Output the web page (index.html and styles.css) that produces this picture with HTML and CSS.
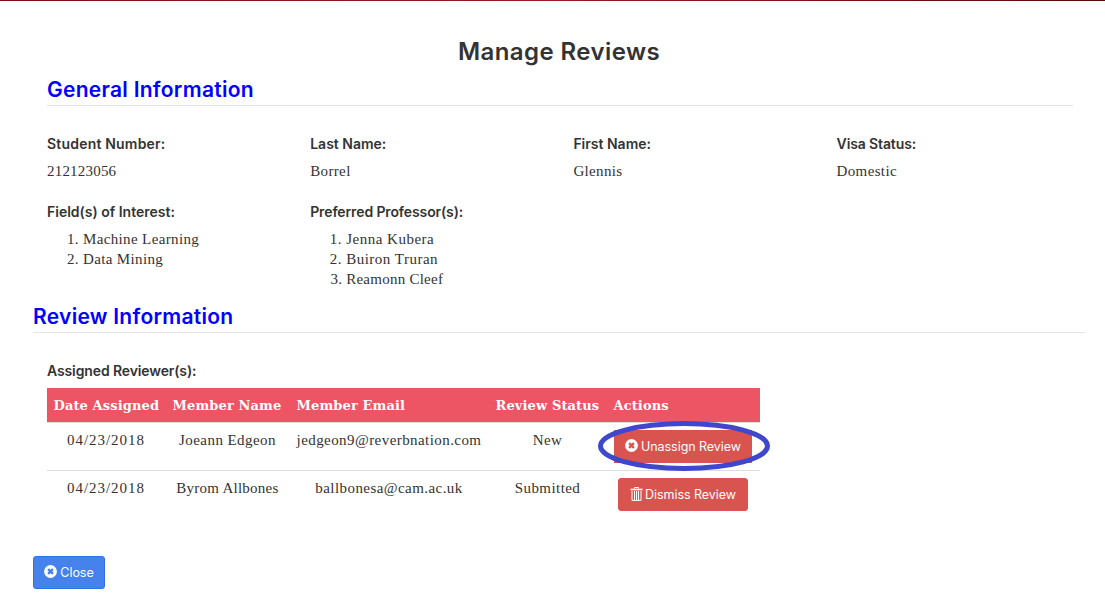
FILE: index.html
```html
<!DOCTYPE html>
<html lang="en">
<head>
<meta charset="utf-8">
<title>Manage Reviews</title>
<link rel="stylesheet" href="styles.css">
</head>
<body>
<main class="page">
  <h1 class="page-title">Manage Reviews</h1>
  <section class="general">
    <h2 class="section-title">General Information</h2>
    <div class="fields">
      <div class="field"><h3 class="label label-number">Student Number:</h3><p class="value value-number">212123056</p></div>
      <div class="field"><h3 class="label">Last Name:</h3><p class="value">Borrel</p></div>
      <div class="field"><h3 class="label">First Name:</h3><p class="value">Glennis</p></div>
      <div class="field"><h3 class="label label-tight">Visa Status:</h3><p class="value">Domestic</p></div>
      <div class="field"><h3 class="label">Field(s) of Interest:</h3>
        <ol class="list"><li>Machine Learning</li><li>Data Mining</li></ol></div>
      <div class="field"><h3 class="label label-tight">Preferred Professor(s):</h3>
        <ol class="list list-wide"><li>Jenna Kubera</li><li>Buiron Truran</li><li class="name-tight">Reamonn Cleef</li></ol></div>
    </div>
  </section>
  <section class="review">
    <h2 class="section-title">Review Information</h2>
    <div class="reviewers">
      <h3 class="label label-tight">Assigned Reviewer(s):</h3>
      <table class="table">
        <colgroup><col class="col-date"><col class="col-name"><col class="col-email"><col class="col-status"><col></colgroup>
        <thead><tr><th>Date Assigned</th><th>Member Name</th><th>Member Email</th><th>Review Status</th><th>Actions</th></tr></thead>
        <tbody>
          <tr><td class="date">04/23/2018</td><td>Joeann Edgeon</td><td>jedgeon9@reverbnation.com</td><td>New</td>
            <td><div class="action"><button class="btn btn-danger btn-unassign"><svg class="icon" viewBox="0 0 13 13"><circle cx="6.5" cy="6.5" r="6.4" fill="currentColor"/><path class="cut" d="M4.1 4.1l4.8 4.8M8.9 4.1l-4.8 4.8"/></svg>Unassign Review</button>
            <svg class="ring" viewBox="0 0 174 52"><ellipse cx="87" cy="26" rx="83.5" ry="22.5"/></svg></div></td></tr>
          <tr><td class="date">04/23/2018</td><td class="name-tight">Byrom Allbones</td><td>ballbonesa@cam.ac.uk</td><td>Submitted</td>
            <td><div class="action"><button class="btn btn-danger btn-dismiss"><svg class="icon trash" viewBox="0 0 13 14"><path d="M4.5 1.5V.5h4v1M2 4v9.4h9V4M4.5 4v9M6.5 4v9M8.5 4v9"/><path class="lid" d="M.5 2.5h12"/></svg>Dismiss Review</button></div></td></tr>
        </tbody>
      </table>
    </div>
  </section>
  <button class="btn btn-primary"><svg class="icon" viewBox="0 0 13 13"><circle cx="6.5" cy="6.5" r="6.4" fill="currentColor"/><path class="cut" d="M4.1 4.1l4.8 4.8M8.9 4.1l-4.8 4.8"/></svg>Close</button>
</main>
</body>
</html>
```
FILE: styles.css
```css
* { box-sizing: border-box; }
body { margin: 0; color: #333; background: #fff; font-family: "Liberation Serif", serif; font-size: 15px; line-height: 20px; letter-spacing: .36px; }
body::before { content: ""; display: block; height: 1px; background: linear-gradient(90deg, #7b1013, #9b1b20 50%, #5c0808); }
h1, h2, h3, p, ol { margin: 0; }
.page { padding: 37px 20px 0 33px; }
.page-title { font: 600 24px/28px Inter, sans-serif; text-align: center; letter-spacing: .42px; }
.section-title { font: 600 21px/26px Inter, sans-serif; color: #00f; height: 29px; border-bottom: 1px solid #e5e5e5; letter-spacing: .28px; }
.general { padding: 11px 12px 0 14px; }
.fields { display: grid; grid-template-columns: repeat(4, 263.2px); row-gap: 21px; padding-top: 28px; }
.label { font: 600 14px/20px Inter, sans-serif; letter-spacing: 0; }
.label-number { letter-spacing: .2px; }
.label-tight { letter-spacing: -.12px; }
.value, .list { margin-top: 7px; }
.value-number { letter-spacing: .2px; }
.list { padding-left: 36px; }
.list-wide { letter-spacing: .5px; }
.review { padding-top: 15px; }
.reviewers { padding: 28px 0 0 14px; }
.table { width: 713px; table-layout: fixed; border-collapse: separate; border-spacing: 0; margin-top: 7px; }
.col-date { width: 119px; }
.col-name { width: 124px; }
.col-email { width: 199px; }
.col-status { width: 118px; }
th { background: #ed5565; color: #fff; text-align: left; height: 34px; padding: 2px 6px 0 6.5px; white-space: nowrap; font: 700 13px/20px "DejaVu Serif", serif; letter-spacing: .12px; }
td { border-top: 1px solid #ddd; height: 48px; padding: 7px 1px 7px 0; text-align: center; vertical-align: top; letter-spacing: .43px; }
.date { letter-spacing: .95px; }
.name-tight { letter-spacing: .25px; }
.action { position: relative; display: flex; justify-content: center; }
.btn { display: flex; align-items: center; justify-content: center; gap: 3px; height: 33px; padding: 0; border: 1px solid #d9534f; border-radius: 3px; color: #fff; font: 400 12.5px/20px Inter, sans-serif; letter-spacing: -.05px; }
.btn-danger { background: #d9534f; }
.btn-unassign { width: 138px; border-radius: 0; }
.btn-dismiss { width: 130px; }
.btn-primary { width: 72px; background: #4582ec; border-color: #2e72ea; margin-top: 38px; }
.icon { width: 13px; height: 13px; margin-top: -2px; }
.cut { stroke: #d9534f; stroke-width: 2.3; }
.btn-primary .cut { stroke: #4582ec; }
.trash { height: 14px; fill: none; stroke: #fff; margin-right: -1px; }
.lid { stroke-width: 1.6; }
.ring { position: absolute; left: -10px; top: -10px; width: 174px; height: 52px; fill: none; stroke: #3f48cc; stroke-width: 5; }
```
